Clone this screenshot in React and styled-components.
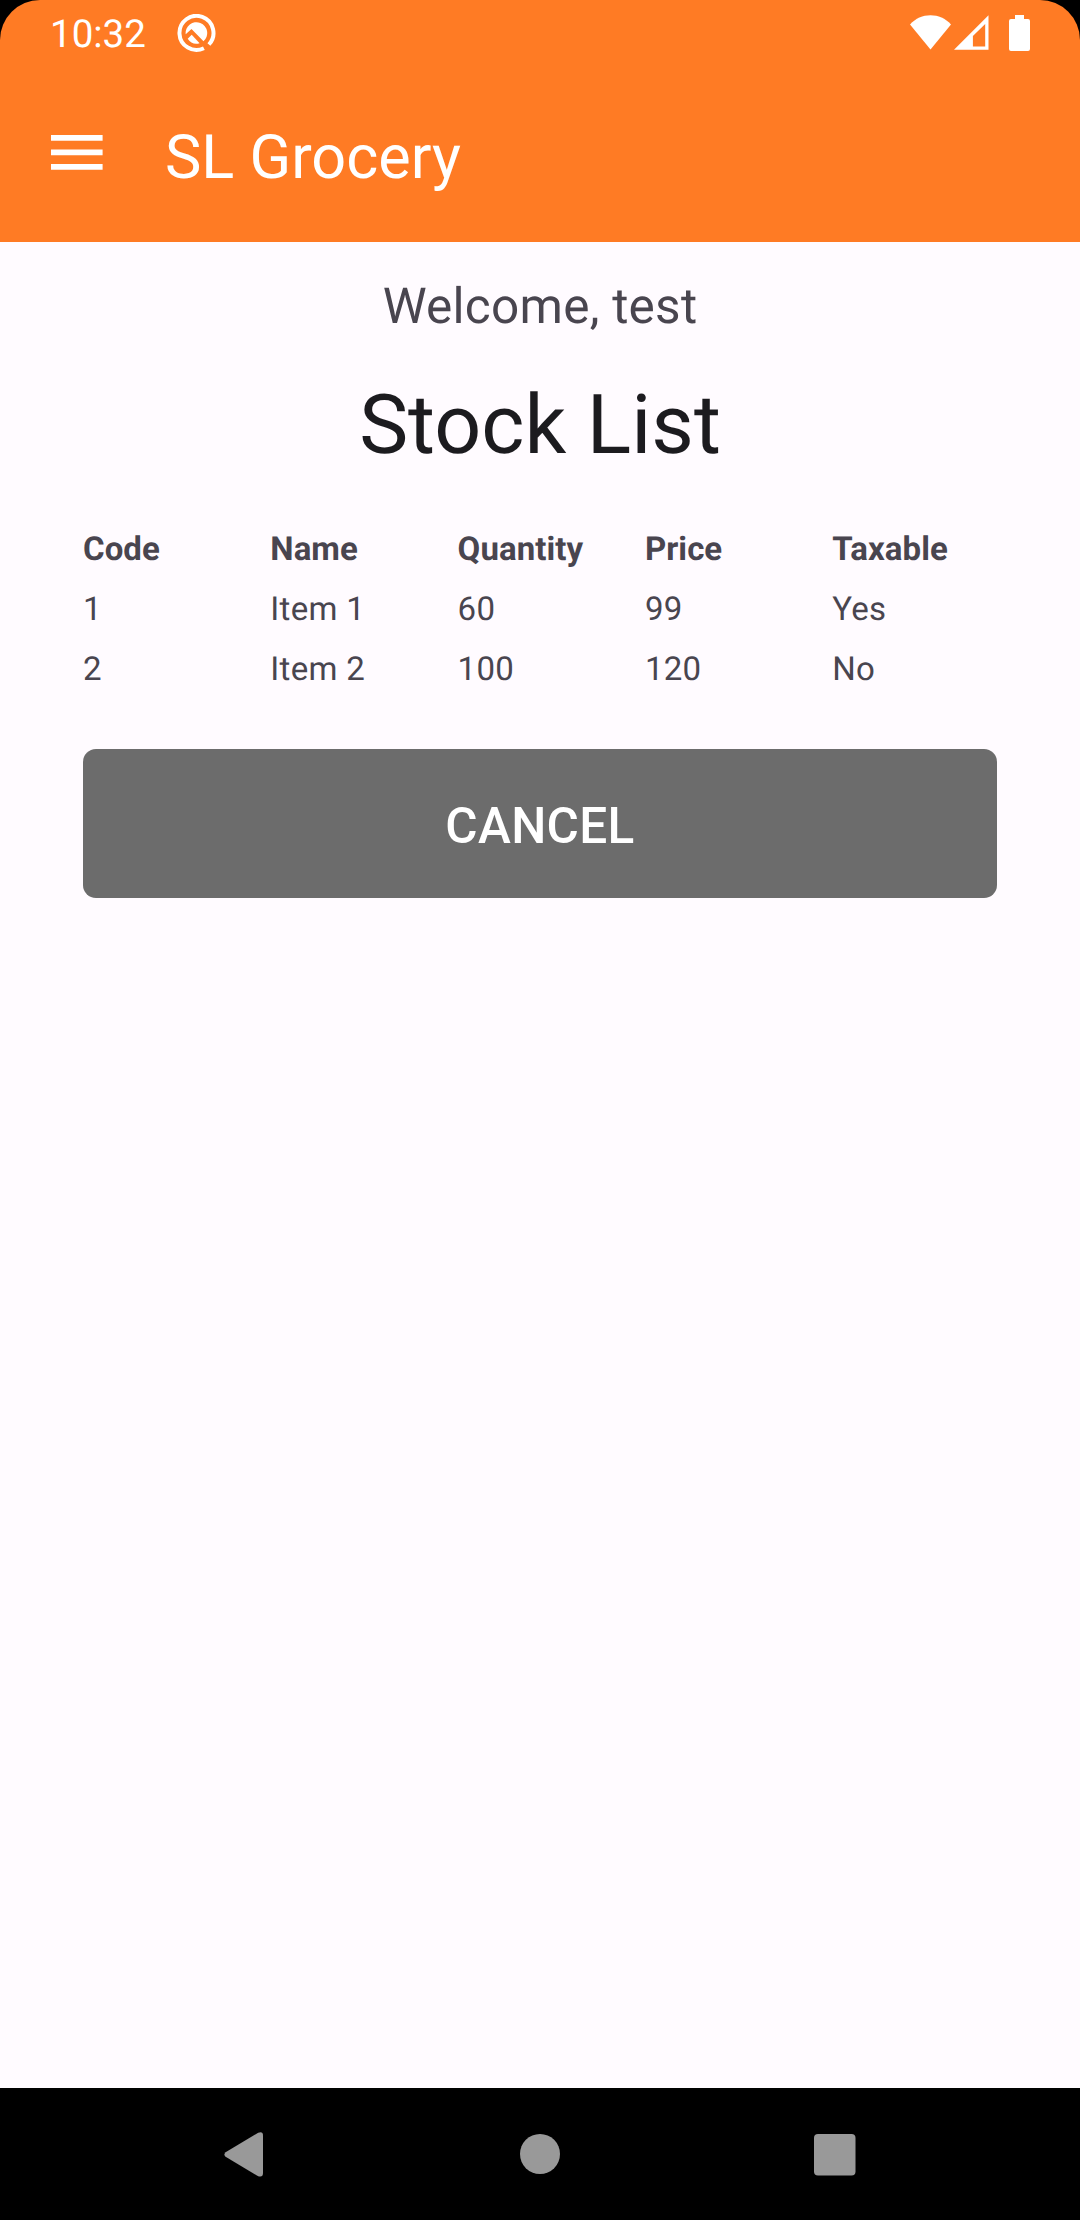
import React from "react";
import styled, { createGlobalStyle } from "styled-components";

const GlobalStyle = createGlobalStyle`
  * { box-sizing: border-box; }
  body {
    margin: 0;
    background: #000;
    font-family: Roboto, "Noto Sans", sans-serif;
    text-rendering: geometricPrecision;
  }
`;

const Screen = styled.div`
  width: 1080px;
  height: 2220px;
  display: flex;
  flex-direction: column;
  overflow: hidden;
  background: #000;
`;

const Header = styled.header`
  height: 242px;
  flex: none;
  background: #ff7b24;
  color: #fff;
  border-radius: 40px 40px 0 0;
`;

const StatusBar = styled.div`
  height: 66px;
  padding: 0 50px 0 50px;
  display: flex;
  justify-content: space-between;
`;

const StatusGroup = styled.div`
  display: flex;
  align-items: flex-start;
`;

const Clock = styled.span`
  font-size: 38.5px;
  line-height: 46px;
  padding-top: 12px;
  width: 127px;
`;

const StatusIcon = styled.svg`
  display: block;
  fill: currentColor;
  margin-top: ${(p) => p.$top}px;
  margin-right: ${(p) => p.$gap || 0}px;
`;

const Toolbar = styled.div`
  height: 176px;
  padding-left: 51px;
  display: flex;
  align-items: flex-start;
`;

const MenuButton = styled.button`
  width: 114px;
  padding: 69px 0 0;
  border: 0;
  background: none;
  color: inherit;
  display: flex;
`;

const AppTitle = styled.h1`
  margin: 0;
  padding-top: 55px;
  font-size: 61.2px;
  line-height: 72px;
  font-weight: 400;
`;

const Content = styled.main`
  flex: 1;
  background: #fffbff;
  padding: 0 83px;
  display: flex;
  flex-direction: column;
`;

const Welcome = styled.p`
  margin: 36px 0 0;
  text-align: center;
  font-size: 49.5px;
  line-height: 58px;
  letter-spacing: 0.25px;
  color: #49454f;
`;

const Heading = styled.h2`
  margin: 41px 0 0;
  text-align: center;
  font-size: 82.5px;
  line-height: 98px;
  font-weight: 400;
  color: #1c1b1f;
`;

const Table = styled.div`
  margin-top: 45px;
  display: flex;
  flex-direction: column;
`;

const Row = styled.div`
  height: 60px;
  display: grid;
  grid-template-columns: repeat(5, 187.3px);
  font-size: 33px;
  line-height: 60px;
  letter-spacing: ${(p) => (p.$head ? 0.05 : 0.3)}px;
  font-weight: ${(p) => (p.$head ? 700 : 400)};
  color: #49454f;
`;

const CancelButton = styled.button`
  margin-top: 49px;
  height: 149px;
  border: 0;
  border-radius: 13px;
  background: #6c6c6c;
  color: #fff;
  font-family: inherit;
  font-size: 49.5px;
  font-weight: 500;
  line-height: 58px;
  letter-spacing: 0.35px;
  padding: 4px 0 0;
`;

const NavBar = styled.nav`
  height: 132px;
  flex: none;
  padding: 44px 224px 0;
  background: #000;
  color: #999;
  display: flex;
  justify-content: space-between;
  align-items: flex-start;
`;

const NavIcon = styled.svg`
  display: block;
  fill: currentColor;
`;

const columns = ["Code", "Name", "Quantity", "Price", "Taxable"];
const items = [
  ["1", "Item 1", "60", "99", "Yes"],
  ["2", "Item 2", "100", "120", "No"],
];

export default function App() {
  return (
    <Screen>
      <GlobalStyle />
      <Header>
        <StatusBar>
          <StatusGroup>
            <Clock>10:32</Clock>
            <StatusIcon $top={14} width="39" height="39" viewBox="0 0 39 39">
              <path
                d="M26.9 34.2A17 17 0 1 1 31.9 30.5"
                fill="none"
                stroke="#fff"
                strokeWidth="4"
              />
              <path d="M8.7 20.3A10.8 10.8 0 1 1 26.5 27.2L14.5 15Z" />
              <path d="M10.7 24.7L14.7 20.7L22.6 29.2A10.8 10.8 0 0 1 10.7 24.7Z" />
            </StatusIcon>
          </StatusGroup>
          <StatusGroup>
            <StatusIcon $top={15} $gap={2} width="42" height="35" viewBox="0 0 42 35">
              <path d="M0 9.5C5.6 3.2 12.8 0.2 20.5 0.2S35.4 3.2 41 9.5L20.5 34.5Z" />
            </StatusIcon>
            <StatusIcon $top={15} $gap={20} width="35" height="35" viewBox="0 0 35 35">
              <path fillRule="evenodd" d="M34.5 0.3V34.8H0ZM31.2 8.9L18.9 21V31.4H31.2Z" />
            </StatusIcon>
            <StatusIcon $top={15} width="21" height="36" viewBox="0 0 21 36">
              <path d="M6 0H15V4H19Q21 4 21 6V34Q21 36 19 36H2Q0 36 0 34V6Q0 4 2 4H6Z" />
            </StatusIcon>
          </StatusGroup>
        </StatusBar>
        <Toolbar>
          <MenuButton aria-label="Menu">
            <StatusIcon $top={0} width="52" height="35" viewBox="0 0 52 35">
              <path d="M0 0H51.6V5.8H0ZM0 14.4H51.6V20.2H0ZM0 28.9H51.6V34.7H0Z" />
            </StatusIcon>
          </MenuButton>
          <AppTitle>SL Grocery</AppTitle>
        </Toolbar>
      </Header>
      <Content>
        <Welcome>Welcome, test</Welcome>
        <Heading>Stock List</Heading>
        <Table>
          <Row $head>
            {columns.map((c) => (
              <span key={c}>{c}</span>
            ))}
          </Row>
          {items.map((item) => (
            <Row key={item[0]}>
              {item.map((value, i) => (
                <span key={columns[i]}>{value}</span>
              ))}
            </Row>
          ))}
        </Table>
        <CancelButton>CANCEL</CancelButton>
      </Content>
      <NavBar>
        <NavIcon width="42" height="46" viewBox="0 0 42 46">
          <path d="M1.6 20.2L34.2 0.8Q39 -1 39 3.6V41Q39 45.8 34.2 44.2L1.6 24.8Q-0.8 22.5 1.6 20.2Z" />
        </NavIcon>
        <NavIcon width="40" height="44" viewBox="0 0 40 44">
          <circle cx="20" cy="22" r="20" />
        </NavIcon>
        <NavIcon width="42" height="44" viewBox="0 0 42 44">
          <rect y="2" width="41.5" height="41.5" rx="4" />
        </NavIcon>
      </NavBar>
    </Screen>
  );
}
